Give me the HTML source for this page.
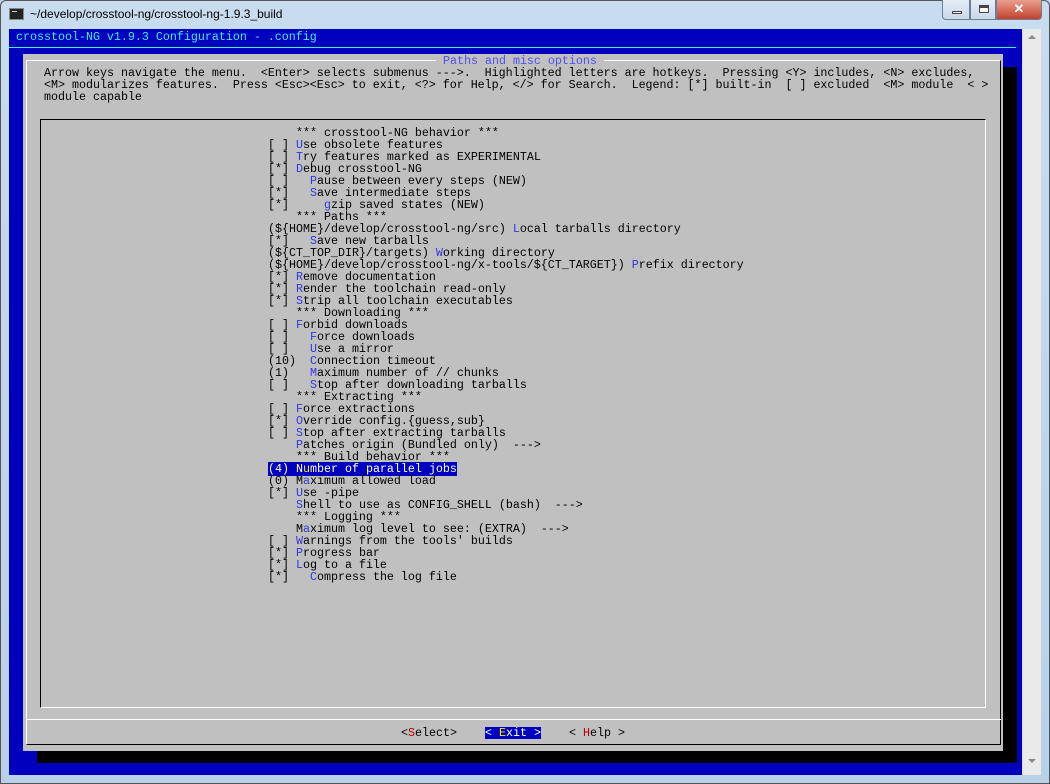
<!DOCTYPE html>
<html><head><meta charset="utf-8"><style>
*{margin:0;padding:0;box-sizing:border-box}
body{width:1050px;height:784px;overflow:hidden;background:#bcd4ea;position:relative;font-family:"Liberation Sans",sans-serif}
.frame{position:absolute;left:0;top:0;width:1050px;height:784px;background:linear-gradient(#c9dcef,#b8d0e8);border:1px solid #555;border-radius:6px 6px 0 0}
.title{position:absolute;left:30px;top:7px;font-size:12px;color:#000}
.ticon{position:absolute;left:9px;top:8px;width:15px;height:12px;background:#222;border:1px solid #888}
.ticon:after{content:"";position:absolute;left:2px;top:2px;width:5px;height:2px;border-top:1px solid #ccc}
.btns{position:absolute;right:8px;top:0;height:20px;display:flex}
.btns div{height:20px;border:1px solid #6a7e96;border-top:none}
.client{position:absolute;left:9px;top:29px;width:1013px;height:746px;background:#0000be;overflow:hidden}
.sb{position:absolute;left:1022px;top:29px;width:19px;height:746px;background:#eaeaea;border-left:1px solid #ddd}
.t{position:absolute;font-family:"Liberation Mono",monospace;font-size:11.67px;line-height:12px;white-space:pre;color:#000}
.h{color:#3535e0}
.r{color:#c00000}
.y{color:#f0f000}
</style></head><body>
<div class="frame"></div>
<div class="ticon"></div>
<div class="title">~/develop/crosstool-ng/crosstool-ng-1.9.3_build</div>
<div class="btns">
<div style="width:28px;border-radius:0 0 0 4px;background:linear-gradient(#e6eef7,#c8d8ea);position:relative"><div style="position:absolute;left:9px;top:11px;width:10px;height:3px;background:#fff;border:1px solid #444"></div></div>
<div style="width:26px;background:linear-gradient(#e6eef7,#c8d8ea);position:relative"><div style="position:absolute;left:8px;top:5px;width:10px;height:8px;border:1px solid #444;border-top-width:3px;background:#fff"></div></div>
<div style="width:46px;border-radius:0 0 4px 0;background:linear-gradient(#e9a08f,#c4402a);color:#fff;text-align:center;font-weight:bold;font-size:13px;line-height:18px">✕</div>
</div>
<div class="sb"><div style="position:absolute;left:5px;top:6px;border:4px solid transparent;border-bottom:4px solid #888;border-top:none"></div><div style="position:absolute;left:5px;bottom:12px;border:4px solid transparent;border-top:4px solid #888;border-bottom:none"></div></div>
<div class="client">
<div class="t" style="left:7px;top:2px;color:#3cf0f0">crosstool-NG v1.9.3 Configuration - .config</div>
<div style="position:absolute;left:0;top:18px;width:1007px;height:1px;background:#3cf0f0"></div>
<div style="position:absolute;left:28px;top:38px;width:980px;height:696px;background:#000"></div>
<div style="position:absolute;left:14px;top:25px;width:980px;height:697px;background:#c0c0c0"></div>
<div style="position:absolute;left:17px;top:31px;width:975px;height:685px;border-left:1px solid #fff;border-top:1px solid #fff;border-right:1px solid #000;border-bottom:1px solid #000"></div>
<div style="position:absolute;left:18px;top:690px;width:974px;height:1px;background:#fff"></div>
<div class="t" style="left:427px;top:26px;background:#c0c0c0;color:#5050f0"> Paths and misc options </div>
<div style="position:absolute;left:31px;top:90px;width:946px;height:589px;border-left:1px solid #000;border-top:1px solid #000;border-right:1px solid #fff;border-bottom:1px solid #fff"></div>
<div class="t" style="left:35px;top:38px">Arrow keys navigate the menu.  &lt;Enter&gt; selects submenus ---&gt;.  Highlighted letters are hotkeys.  Pressing &lt;Y&gt; includes, &lt;N&gt; excludes,
&lt;M&gt; modularizes features.  Press &lt;Esc&gt;&lt;Esc&gt; to exit, &lt;?&gt; for Help, &lt;/&gt; for Search.  Legend: [*] built-in  [ ] excluded  &lt;M&gt; module  &lt; &gt;
module capable</div>
<div class="t" style="left:259px;top:98px">    *** crosstool-NG behavior ***
[ ] <span class="h">U</span>se obsolete features
[ ] <span class="h">T</span>ry features marked as EXPERIMENTAL
[*] <span class="h">D</span>ebug crosstool-NG
[ ]   <span class="h">P</span>ause between every steps (NEW)
[*]   <span class="h">S</span>ave intermediate steps
[*]     <span class="h">g</span>zip saved states (NEW)
    *** Paths ***
(${HOME}/develop/crosstool-ng/src) <span class="h">L</span>ocal tarballs directory
[*]   <span class="h">S</span>ave new tarballs
(${CT_TOP_DIR}/targets) <span class="h">W</span>orking directory
(${HOME}/develop/crosstool-ng/x-tools/${CT_TARGET}) <span class="h">P</span>refix directory
[*] <span class="h">R</span>emove documentation
[*] <span class="h">R</span>ender the toolchain read-only
[*] <span class="h">S</span>trip all toolchain executables
    *** Downloading ***
[ ] <span class="h">F</span>orbid downloads
[ ]   <span class="h">F</span>orce downloads
[ ]   <span class="h">U</span>se a mirror
(10)  <span class="h">C</span>onnection timeout
(1)   <span class="h">M</span>aximum number of // chunks
[ ]   <span class="h">S</span>top after downloading tarballs
    *** Extracting ***
[ ] <span class="h">F</span>orce extractions
[*] <span class="h">O</span>verride config.{guess,sub}
[ ] <span class="h">S</span>top after extracting tarballs
    <span class="h">P</span>atches origin (Bundled only)  ---&gt;
    *** Build behavior ***
<span style="background:#0000be;color:#fff">(4) N<span class="y">u</span>mber of parallel jobs</span>
(0) M<span class="h">a</span>ximum allowed load
[*] <span class="h">U</span>se -pipe
    <span class="h">S</span>hell to use as CONFIG_SHELL (bash)  ---&gt;
    *** Logging ***
    M<span class="h">a</span>ximum log level to see: (EXTRA)  ---&gt;
[ ] <span class="h">W</span>arnings from the tools' builds
[*] <span class="h">P</span>rogress bar
[*] <span class="h">L</span>og to a file
[*]   <span class="h">C</span>ompress the log file</div>
<div class="t" style="left:392px;top:698px">&lt;<span class="r">S</span>elect&gt;</div>
<div class="t" style="left:476px;top:698px;background:#0000be;color:#fff">&lt; <span class="y">E</span>xit &gt;</div>
<div class="t" style="left:560px;top:698px">&lt; <span class="r">H</span>elp &gt;</div>
</div>
</body></html>
